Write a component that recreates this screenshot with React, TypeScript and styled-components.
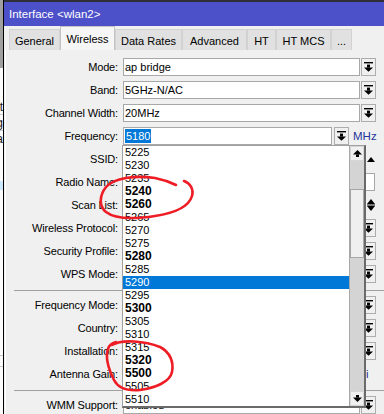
import React from "react";
import styled, { createGlobalStyle } from "styled-components";

const GlobalStyle = createGlobalStyle`
  html, body {
    margin: 0;
    padding: 0;
  }
  body {
    width: 384px;
    height: 414px;
    overflow: hidden;
    background: #f0f0f0;
    font-family: "Liberation Sans", Arial, sans-serif;
    font-size: 11px;
    color: #000;
  }
  * {
    box-sizing: border-box;
  }
`;

const Screen = styled.div`
  position: relative;
  width: 384px;
  height: 414px;
  overflow: hidden;
  display: flex;
`;

/* the window behind, only a sliver shows */
const BackStrip = styled.div`
  width: 3px;
  display: flex;
  flex-direction: column;
  background: #fbfbfb;
  overflow: hidden;
`;

const BackTop = styled.div`
  height: 68px;
  background: #a0a0a0;
`;

const BackRow = styled.div<{ $h: number; $line?: boolean; $sel?: boolean }>`
  height: ${(p) => p.$h}px;
  display: flex;
  justify-content: flex-end;
  align-items: center;
  white-space: nowrap;
  font-size: 12px;
  color: #1a1a1a;
  border-bottom: ${(p) => (p.$line ? "1px solid #c8c8c8" : "none")};
  background: ${(p) => (p.$sel ? "#cce8ff" : "transparent")};
`;

const FrameLine = styled.div`
  width: 1px;
  background: #000;
`;

const Window = styled.div`
  flex: 1;
  min-width: 0;
  display: flex;
  flex-direction: column;
  background: #f0f0f0;
`;

const TitleBar = styled.div`
  height: 26px;
  border-top: 2px solid #2f2f3a;
  background: #4c50c9;
  color: #fff;
  font-size: 11.5px;
  display: flex;
  align-items: center;
  padding-left: 5px;
  white-space: nowrap;
`;

const TabStrip = styled.div`
  height: 24px;
  display: flex;
  align-items: flex-end;
  padding-left: 5px;
`;

const Tab = styled.div<{ $w: number; $active?: boolean }>`
  width: ${(p) => p.$w}px;
  height: ${(p) => (p.$active ? 24 : 21)}px;
  display: flex;
  align-items: center;
  justify-content: center;
  padding-top: ${(p) => (p.$active ? 0 : 1)}px;
  background: ${(p) => (p.$active ? "#f6f6f6" : "#e1e1e1")};
  border: 1px solid ${(p) => (p.$active ? "#c4c4c4" : "#d2d2d2")};
  border-bottom: none;
  white-space: nowrap;
  font-size: 11px;
`;

const Panel = styled.div`
  flex: 1;
  margin-left: 1px;
  border-left: 1px solid #ffffff;
  padding-top: 8px;
  display: flex;
  flex-direction: column;
  gap: 5px;
`;

const Row = styled.div`
  height: 18px;
  display: flex;
  align-items: center;
`;

const Label = styled.div`
  width: 113px;
  padding-right: 1px;
  text-align: right;
  white-space: nowrap;
  letter-spacing: -0.15px;
`;

const Field = styled.div<{ $w: number }>`
  width: ${(p) => p.$w}px;
  height: 18px;
  margin-left: 4px;
  background: #fff;
  border: 1px solid #a8a8a8;
  padding-left: 1px;
  display: flex;
  align-items: center;
  white-space: nowrap;
  overflow: hidden;
`;

const Picked = styled.span`
  background: #0078d7;
  color: #fff;
  padding: 0 1px;
  line-height: 14px;
`;

const DropButton = styled.div<{ $gap?: number }>`
  width: 15px;
  height: 18px;
  margin-left: ${(p) => p.$gap ?? 1}px;
  background: #f0f0f0;
  border: 1px solid #adadad;
  display: flex;
  align-items: center;
  justify-content: center;
`;

const Unit = styled.div`
  margin-left: 4px;
  color: #26359b;
  font-size: 11.5px;
  white-space: nowrap;
`;

const SideGlyph = styled.div`
  margin-left: 7px;
  display: flex;
  align-items: center;
`;

const Separator = styled.div`
  height: 3px;
  margin-left: 8px;
  border-bottom: 1px solid #a0a0a0;
`;

/* the open frequency drop-down */
const Popup = styled.div`
  position: absolute;
  left: 122px;
  top: 145px;
  width: 244px;
  height: 263px;
  background: #fff;
  border-top: 1px solid #a0a0a0;
  border-left: 1px solid #a0a0a0;
  border-right: 2px solid #6a6a6a;
  border-bottom: 2px solid #6a6a6a;
  display: flex;
`;

const Items = styled.div`
  width: 226px;
  display: flex;
  flex-direction: column;
`;

const Item = styled.div<{ $bold?: boolean; $selected?: boolean }>`
  height: 13px;
  line-height: 13px;
  padding-left: 2px;
  font-size: ${(p) => (p.$bold ? 12 : 11)}px;
  font-weight: ${(p) => (p.$bold ? 700 : 400)};
  background: ${(p) => (p.$selected ? "#0078d7" : "transparent")};
  color: ${(p) => (p.$selected ? "#fff" : "#000")};
  overflow: hidden;
`;

const ScrollBar = styled.div`
  width: 15px;
  display: flex;
  flex-direction: column;
  border-left: 1px solid #a8a8a8;
`;

const ScrollButton = styled.div`
  height: 15px;
  background: #f0f0f0;
  border: 1px solid #d6d6d6;
  display: flex;
  align-items: center;
  justify-content: center;
`;

const Track = styled.div`
  flex: 1;
  background: #d4d4d4;
  padding-top: 28px;
`;

const Thumb = styled.div`
  height: 69px;
  background: #efefef;
  border: 1px solid #a6a6a6;
`;

const Marks = styled.svg`
  position: absolute;
  left: 0;
  top: 0;
  pointer-events: none;
`;

const DownIcon = () => (
  <svg width="9" height="10" viewBox="0 0 9 10">
    <rect x="0" y="0" width="9" height="1.4" fill="#000" />
    <rect x="3" y="2.6" width="3" height="3" fill="#000" />
    <polygon points="0,5.4 9,5.4 4.5,9.8" fill="#000" />
  </svg>
);

const ScrollUpIcon = () => (
  <svg width="9" height="7" viewBox="0 0 9 7">
    <polygon points="4.5,0 9,4.5 0,4.5" fill="#000" />
    <rect x="3" y="4.4" width="3" height="2.6" fill="#000" />
  </svg>
);

const ScrollDownIcon = () => (
  <svg width="9" height="7" viewBox="0 0 9 7">
    <rect x="3" y="0" width="3" height="2.6" fill="#000" />
    <polygon points="0,2.5 9,2.5 4.5,7" fill="#000" />
  </svg>
);

const UpTriangle = () => (
  <svg width="8" height="5" viewBox="0 0 8 5">
    <polygon points="4,0 8,5 0,5" fill="#000" />
  </svg>
);

const UpDownIcon = () => (
  <svg width="8" height="12" viewBox="0 0 8 12">
    <polygon points="4,0 8,5 0,5" fill="#000" />
    <rect x="0" y="5.5" width="8" height="1" fill="#000" />
    <polygon points="0,7 8,7 4,12" fill="#000" />
  </svg>
);

const tabs = [
  { name: "General", w: 51 },
  { name: "Wireless", w: 55, active: true },
  { name: "Data Rates", w: 67 },
  { name: "Advanced", w: 65 },
  { name: "HT", w: 29 },
  { name: "HT MCS", w: 55 },
  { name: "...", w: 21 },
];

const frequencies: { f: string; bold?: boolean; selected?: boolean }[] = [
  { f: "5225" },
  { f: "5230" },
  { f: "5235" },
  { f: "5240", bold: true },
  { f: "5260", bold: true },
  { f: "5265" },
  { f: "5270" },
  { f: "5275" },
  { f: "5280", bold: true },
  { f: "5285" },
  { f: "5290", selected: true },
  { f: "5295" },
  { f: "5300", bold: true },
  { f: "5305" },
  { f: "5310" },
  { f: "5315" },
  { f: "5320", bold: true },
  { f: "5500", bold: true },
  { f: "5505" },
  { f: "5510" },
];

const SelectRow = ({ label, value }: { label: string; value?: string }) => (
  <Row>
    <Label>{label}</Label>
    <Field $w={237}>{value}</Field>
    <DropButton>
      <DownIcon />
    </DropButton>
  </Row>
);

export default function App() {
  return (
    <>
      <GlobalStyle />
      <Screen>
        <BackStrip>
          <BackTop />
          <BackRow $h={32} />
          <BackRow $h={15} $line>Next</BackRow>
          <BackRow $h={16} $line>Long</BackRow>
          <BackRow $h={16}>Data</BackRow>
          <BackRow $h={34} />
          <BackRow $h={9} $sel />
          <BackRow $h={166} $line />
          <BackRow $h={11} $line />
        </BackStrip>
        <FrameLine />
        <Window>
          <TitleBar>{"Interface <wlan2>"}</TitleBar>
          <TabStrip>
            {tabs.map((t) => (
              <Tab key={t.name} $w={t.w} $active={t.active}>
                {t.name}
              </Tab>
            ))}
          </TabStrip>
          <Panel>
            <SelectRow label="Mode:" value="ap bridge" />
            <SelectRow label="Band:" value="5GHz-N/AC" />
            <SelectRow label="Channel Width:" value="20MHz" />
            <Row>
              <Label>Frequency:</Label>
              <Field $w={209}>
                <Picked>5180</Picked>
              </Field>
              <DropButton $gap={2}>
                <DownIcon />
              </DropButton>
              <Unit>MHz</Unit>
            </Row>
            <Row>
              <Label>SSID:</Label>
              <Field $w={237} />
              <SideGlyph>
                <UpTriangle />
              </SideGlyph>
            </Row>
            <Row>
              <Label>Radio Name:</Label>
              <Field $w={252} />
            </Row>
            <Row>
              <Label>Scan List:</Label>
              <Field $w={237} />
              <SideGlyph>
                <UpDownIcon />
              </SideGlyph>
            </Row>
            <SelectRow label="Wireless Protocol:" />
            <SelectRow label="Security Profile:" />
            <SelectRow label="WPS Mode:" />
            <Separator />
            <SelectRow label="Frequency Mode:" />
            <SelectRow label="Country:" />
            <SelectRow label="Installation:" />
            <Row>
              <Label>Antenna Gain:</Label>
              <Field $w={225} />
              <Unit>dBi</Unit>
            </Row>
            <Separator />
            <SelectRow label="WMM Support:" value="enabled" />
          </Panel>
        </Window>

        <Popup>
          <Items>
            {frequencies.map((it) => (
              <Item key={it.f} $bold={it.bold} $selected={it.selected}>
                {it.f}
              </Item>
            ))}
          </Items>
          <ScrollBar>
            <ScrollButton>
              <ScrollUpIcon />
            </ScrollButton>
            <Track>
              <Thumb />
            </Track>
            <ScrollButton>
              <ScrollDownIcon />
            </ScrollButton>
          </ScrollBar>
        </Popup>

        <Marks width="384" height="414" viewBox="0 0 384 414">
          <path
            d="M 184,181 C 190,183 194,189 192,196 C 189,206 175,213 155,216 C 135,219 115,219 106,212 C 99,206 99,196 106,187 C 114,178 135,175 155,178 C 165,180 172,183 176,185"
            fill="none"
            stroke="#ee1c24"
            strokeWidth="2.6"
            strokeLinecap="round"
          />
          <path
            d="M 112,345 C 122,339 145,341 160,347 C 170,352 174,362 172,372 C 170,382 155,388 140,390 C 128,391 118,388 114,380 C 109,370 105,358 108,349 C 109,345 112,343 116,342"
            fill="none"
            stroke="#ee1c24"
            strokeWidth="2.6"
            strokeLinecap="round"
          />
        </Marks>
      </Screen>
    </>
  );
}
